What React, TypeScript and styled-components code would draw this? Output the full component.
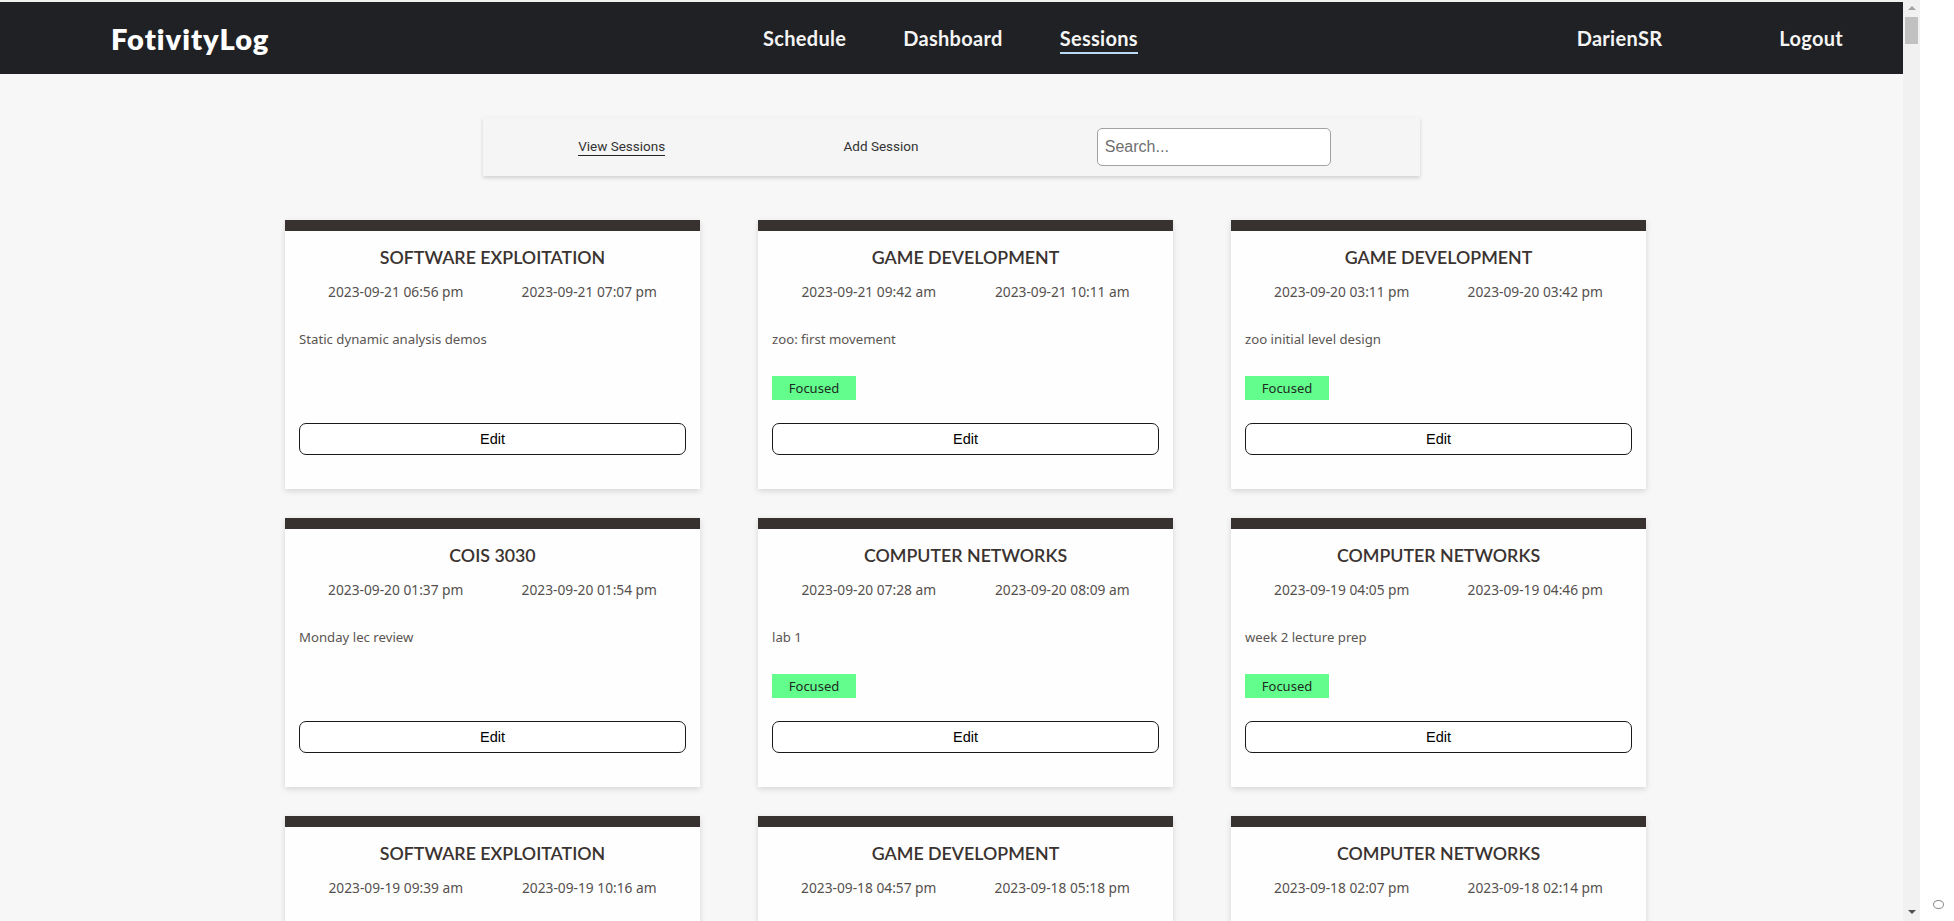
import React from "react";
import styled, { createGlobalStyle } from "styled-components";

const GlobalStyle = createGlobalStyle`
  html, body { margin: 0; padding: 0; overflow: hidden; background: #ffffff; }
  * { box-sizing: border-box; }
`;

type Session = {
  course: string;
  start: string;
  end: string;
  note: string;
  focused?: boolean;
};

const sessions: Session[] = [
  { course: "SOFTWARE EXPLOITATION", start: "2023-09-21 06:56 pm", end: "2023-09-21 07:07 pm", note: "Static dynamic analysis demos" },
  { course: "GAME DEVELOPMENT", start: "2023-09-21 09:42 am", end: "2023-09-21 10:11 am", note: "zoo: first movement", focused: true },
  { course: "GAME DEVELOPMENT", start: "2023-09-20 03:11 pm", end: "2023-09-20 03:42 pm", note: "zoo initial level design", focused: true },
  { course: "COIS 3030", start: "2023-09-20 01:37 pm", end: "2023-09-20 01:54 pm", note: "Monday lec review" },
  { course: "COMPUTER NETWORKS", start: "2023-09-20 07:28 am", end: "2023-09-20 08:09 am", note: "lab 1", focused: true },
  { course: "COMPUTER NETWORKS", start: "2023-09-19 04:05 pm", end: "2023-09-19 04:46 pm", note: "week 2 lecture prep", focused: true },
  { course: "SOFTWARE EXPLOITATION", start: "2023-09-19 09:39 am", end: "2023-09-19 10:16 am", note: "fuzzing lab setup" },
  { course: "GAME DEVELOPMENT", start: "2023-09-18 04:57 pm", end: "2023-09-18 05:18 pm", note: "zoo sprite sheets", focused: true },
  { course: "COMPUTER NETWORKS", start: "2023-09-18 02:07 pm", end: "2023-09-18 02:14 pm", note: "quiz review" },
];

const Shell = styled.div`
  display: flex;
  width: 100vw;
  height: 100vh;
  overflow: hidden;
`;

const Page = styled.div`
  flex: 0 0 1903px;
  height: 100%;
  overflow: hidden;
  background: #f7f7f7;
  border-top: 2px solid #eef2ee;
`;

const Nav = styled.nav`
  height: 72px;
  background: #1f2124;
  display: grid;
  grid-template-columns: 652px 1fr auto;
  align-items: center;
  padding: 0 60px 0 111px;
`;

const Logo = styled.div`
  font-family: "Lato", "Noto Sans", sans-serif;
  font-weight: 800;
  font-size: 29px;
  color: #ffffff;
  letter-spacing: 1px;
`;

const NavGroup = styled.div<{ $gap: number }>`
  display: flex;
  align-items: center;
  gap: ${(p) => p.$gap}px;
`;

const NavLink = styled.a<{ $active?: boolean }>`
  font-family: "Lato", "Noto Sans", sans-serif;
  font-weight: 700;
  font-size: 20px;
  letter-spacing: 0.3px;
  color: #f4f4f4;
  text-decoration: none;
  padding-bottom: 2px;
  border-bottom: 2px solid ${(p) => (p.$active ? "#b9dcf2" : "transparent")};
  margin-top: 3px;
  cursor: pointer;
`;

const Toolbar = styled.div`
  width: 937px;
  height: 59px;
  margin: 43px 0 0 483px;
  background: #f5f5f5;
  box-shadow: 0 2px 4px rgba(0, 0, 0, 0.16);
  display: flex;
  align-items: center;
  justify-content: space-around;
  padding-left: 6px;
`;

const ToolLink = styled.a<{ $active?: boolean }>`
  font-family: "Roboto", "Liberation Sans", sans-serif;
  font-size: 13.5px;
  color: #333333;
  text-decoration: none;
  padding-bottom: 1px;
  border-bottom: 1.5px solid ${(p) => (p.$active ? "#222222" : "transparent")};
  cursor: pointer;
`;

const Search = styled.input`
  width: 234px;
  height: 38px;
  border: 1px solid #a2a2a2;
  border-radius: 5px;
  background: #ffffff;
  font-family: "Liberation Sans", Arial, sans-serif;
  font-size: 16px;
  padding: 0 7px;
  outline: none;
  &::placeholder { color: #6f6f6f; }
`;

const Grid = styled.div`
  display: grid;
  grid-template-columns: repeat(3, 415px);
  column-gap: 58px;
  row-gap: 29px;
  margin: 44px 0 0 285px;
`;

const Card = styled.div`
  height: 269px;
  background: #fefefe;
  border-top: 11px solid #37312f;
  box-shadow: 0 2px 6px rgba(0, 0, 0, 0.14);
  padding: 14px 14px 0;
  display: flex;
  flex-direction: column;
`;

const Title = styled.h3`
  margin: 0;
  text-align: center;
  font-family: "Lato", "Noto Sans", sans-serif;
  font-weight: 600;
  font-size: 17.8px;
  line-height: 24px;
  color: #3a3330;
`;

const Times = styled.div`
  display: grid;
  grid-template-columns: 1fr 1fr;
  margin-top: 14px;
`;

const Time = styled.span`
  text-align: center;
  font-family: "Noto Sans", "Open Sans", sans-serif;
  font-size: 13.75px;
  line-height: 18px;
  color: #55504d;
`;

const Note = styled.p`
  margin: 29px 0 0;
  font-family: "Noto Sans", "Open Sans", sans-serif;
  font-size: 13.2px;
  line-height: 18px;
  color: #5a5552;
`;

const BadgeSlot = styled.div`
  height: 24px;
  margin-top: 28px;
  display: flex;
`;

const Badge = styled.span`
  width: 84px;
  height: 24px;
  background: #63fd8d;
  color: #1c2a1f;
  font-family: "Noto Sans", "Open Sans", sans-serif;
  font-size: 13px;
  display: flex;
  align-items: center;
  justify-content: center;
`;

const EditButton = styled.button`
  margin-top: 23px;
  height: 32px;
  width: 100%;
  background: #ffffff;
  border: 1px solid #1a1a1a;
  border-radius: 7px;
  font-family: "Liberation Sans", Arial, sans-serif;
  font-size: 14.5px;
  color: #000000;
  cursor: pointer;
`;

const Rail = styled.div`
  flex: 0 0 17px;
  height: 100%;
  background: #f1f1f1;
  display: flex;
  flex-direction: column;
  align-items: center;
`;

const ArrowUp = styled.div`
  margin-top: 6px;
  width: 0;
  height: 0;
  border-left: 4px solid transparent;
  border-right: 4px solid transparent;
  border-bottom: 4px solid #a3a3a3;
`;

const Thumb = styled.div`
  margin-top: 7px;
  width: 13px;
  height: 27px;
  background: #c1c1c1;
`;

const ArrowDown = styled.div`
  margin-top: auto;
  margin-bottom: 7px;
  width: 0;
  height: 0;
  border-left: 4px solid transparent;
  border-right: 4px solid transparent;
  border-top: 4px solid #505050;
`;

const Strip = styled.div`
  flex: 1;
  height: 100%;
  background: #ffffff;
  display: flex;
  flex-direction: column;
  align-items: center;
  justify-content: flex-end;
  padding-bottom: 12px;
`;

const Ring = styled.div`
  width: 11px;
  height: 9px;
  border: 1px solid #8a8a8a;
  border-radius: 50%;
  margin-left: 2px;
`;

export default function App() {
  return (
    <>
      <GlobalStyle />
      <Shell>
        <Page>
          <Nav>
            <Logo>FotivityLog</Logo>
            <NavGroup $gap={57}>
              <NavLink>Schedule</NavLink>
              <NavLink>Dashboard</NavLink>
              <NavLink $active>Sessions</NavLink>
            </NavGroup>
            <NavGroup $gap={117}>
              <NavLink>DarienSR</NavLink>
              <NavLink>Logout</NavLink>
            </NavGroup>
          </Nav>
          <Toolbar>
            <ToolLink $active>View Sessions</ToolLink>
            <ToolLink>Add Session</ToolLink>
            <Search placeholder="Search..." />
          </Toolbar>
          <Grid>
            {sessions.map((s, i) => (
              <Card key={i}>
                <Title>{s.course}</Title>
                <Times>
                  <Time>{s.start}</Time>
                  <Time>{s.end}</Time>
                </Times>
                <Note>{s.note}</Note>
                <BadgeSlot>{s.focused && <Badge>Focused</Badge>}</BadgeSlot>
                <EditButton>Edit</EditButton>
              </Card>
            ))}
          </Grid>
        </Page>
        <Rail>
          <ArrowUp />
          <Thumb />
          <ArrowDown />
        </Rail>
        <Strip>
          <Ring />
        </Strip>
      </Shell>
    </>
  );
}
